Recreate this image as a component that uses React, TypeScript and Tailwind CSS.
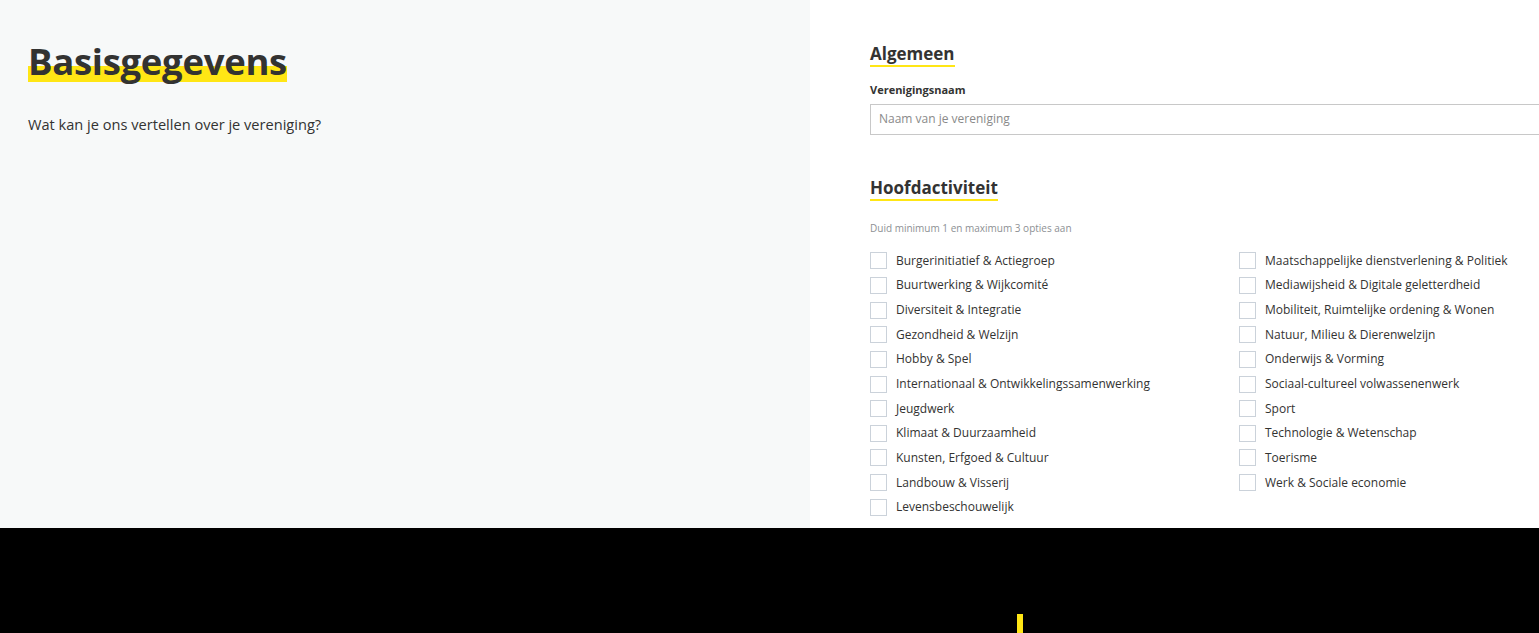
import React from 'react';

const left = [
  'Burgerinitiatief & Actiegroep',
  'Buurtwerking & Wijkcomité',
  'Diversiteit & Integratie',
  'Gezondheid & Welzijn',
  'Hobby & Spel',
  'Internationaal & Ontwikkelingssamenwerking',
  'Jeugdwerk',
  'Klimaat & Duurzaamheid',
  'Kunsten, Erfgoed & Cultuur',
  'Landbouw & Visserij',
  'Levensbeschouwelijk',
];

const right = [
  'Maatschappelijke dienstverlening & Politiek',
  'Mediawijsheid & Digitale geletterdheid',
  'Mobiliteit, Ruimtelijke ordening & Wonen',
  'Natuur, Milieu & Dierenwelzijn',
  'Onderwijs & Vorming',
  'Sociaal-cultureel volwassenenwerk',
  'Sport',
  'Technologie & Wetenschap',
  'Toerisme',
  'Werk & Sociale economie',
];

const font = { fontFamily: '"Open Sans", "Liberation Sans", sans-serif' };

const Check = ({ label }: { label: string }) => (
  <label className="flex items-center h-[24.65px] gap-[9px] text-[12px] text-[#333332]">
    <span className="w-[17px] h-[17px] border border-[#cbd2da] bg-white shrink-0"></span>
    <span>{label}</span>
  </label>
);

const SectionTitle = ({ children }: { children: React.ReactNode }) => (
  <h2 className="text-[17px] font-bold text-[#333332] leading-[22px] inline-block border-b-2 border-[#ffe615]">
    {children}
  </h2>
);

export default function App() {
  return (
    <div className="flex flex-col h-[633px] overflow-hidden" style={font}>
      <div className="flex h-[528px]">
        {/* linker kolom */}
        <div className="w-[810px] shrink-0 bg-[#f7f9f9] pl-[28px] pt-[37px]">
          <h1 className="text-[36.5px] font-bold text-[#333332] leading-[48px] tracking-[-0.3px]">
            <span className="bg-[linear-gradient(transparent_60%,#ffe615_60%,#ffe615_93%,transparent_93%)]">
              Basisgegevens
            </span>
          </h1>
          <p className="mt-[29px] text-[14.6px] text-[#333332]">Wat kan je ons vertellen over je vereniging?</p>
        </div>

        {/* rechter kolom */}
        <div className="flex-1 bg-white pl-[60px] pt-[42px] overflow-hidden">
          <SectionTitle>Algemeen</SectionTitle>
          <div className="mt-[15px] text-[11px] font-bold text-[#333332]">Verenigingsnaam</div>
          <div className="mt-[5px] w-[800px] h-[31px] border border-[#c8c8c8] flex items-center px-[8px] text-[12px] text-[#8a8a8a]">
            Naam van je vereniging
          </div>

          <div className="mt-[41px]">
            <SectionTitle>Hoofdactiviteit</SectionTitle>
          </div>
          <div className="mt-[20px] text-[10px] text-[#8d9094]">Duid minimum 1 en maximum 3 opties aan</div>

          <div className="mt-[13px] flex">
            <div className="w-[369px] shrink-0">
              {left.map((l) => (
                <Check key={l} label={l} />
              ))}
            </div>
            <div>
              {right.map((l) => (
                <Check key={l} label={l} />
              ))}
            </div>
          </div>
        </div>
      </div>

      {/* zwarte balk */}
      <div className="flex-1 bg-black pt-[86px] pl-[1017px]">
        <div className="w-[6px] h-[19px] bg-[#ffe615]"></div>
      </div>
    </div>
  );
}
